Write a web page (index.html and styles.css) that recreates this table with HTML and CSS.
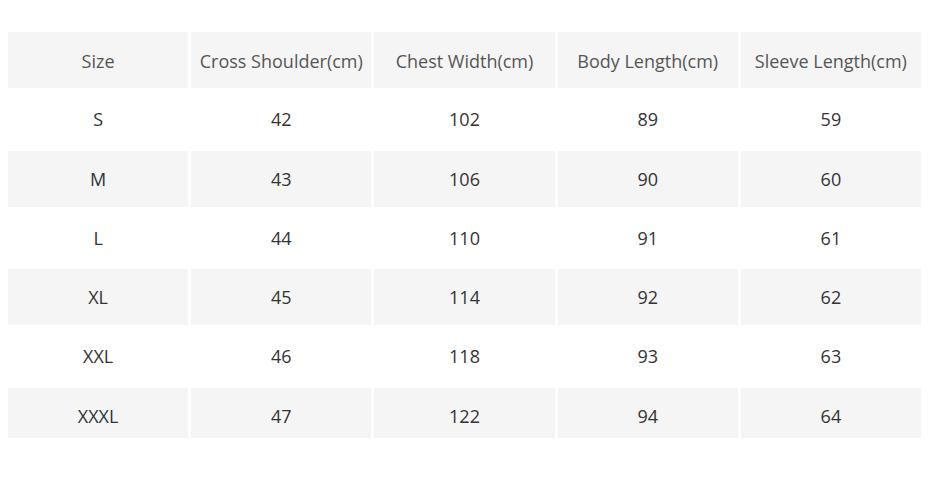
FILE: index.html
```html
<!DOCTYPE html>
<html lang="en">
<head>
<meta charset="utf-8">
<title>Size Chart</title>
<link rel="stylesheet" href="styles.css">
</head>
<body>
<div class="chart">
  <div class="cell head">Size</div>
  <div class="cell head">Cross Shoulder(cm)</div>
  <div class="cell head">Chest Width(cm)</div>
  <div class="cell head">Body Length(cm)</div>
  <div class="cell head">Sleeve Length(cm)</div>

  <div class="cell">S</div><div class="cell">42</div><div class="cell">102</div><div class="cell">89</div><div class="cell">59</div>
  <div class="cell alt">M</div><div class="cell alt">43</div><div class="cell alt">106</div><div class="cell alt">90</div><div class="cell alt">60</div>
  <div class="cell">L</div><div class="cell">44</div><div class="cell">110</div><div class="cell">91</div><div class="cell">61</div>
  <div class="cell alt">XL</div><div class="cell alt">45</div><div class="cell alt">114</div><div class="cell alt">92</div><div class="cell alt">62</div>
  <div class="cell">XXL</div><div class="cell">46</div><div class="cell">118</div><div class="cell">93</div><div class="cell">63</div>
  <div class="cell alt last">XXXL</div><div class="cell alt last">47</div><div class="cell alt last">122</div><div class="cell alt last">94</div><div class="cell alt last">64</div>
</div>
</body>
</html>
```

FILE: styles.css
```css
html, body {
  margin: 0;
  padding: 0;
  background: #ffffff;
}

body {
  padding: 32px 0 0 8px;
  font-family: "Open Sans", "Liberation Sans", sans-serif;
}

.chart {
  width: 913px;
  display: grid;
  grid-template-columns: repeat(5, 1fr);
  grid-template-rows: repeat(6, 56.25px) 50px;
  gap: 3px;
}

.cell {
  display: flex;
  align-items: center;
  justify-content: center;
  font-size: 18px;
  color: #333333;
  background: #ffffff;
}

.head {
  background: #f5f5f5;
  color: #555555;
  padding-top: 1px;
}

.alt {
  background: #f5f5f5;
}

.last {
  padding-top: 7px;
}
```
